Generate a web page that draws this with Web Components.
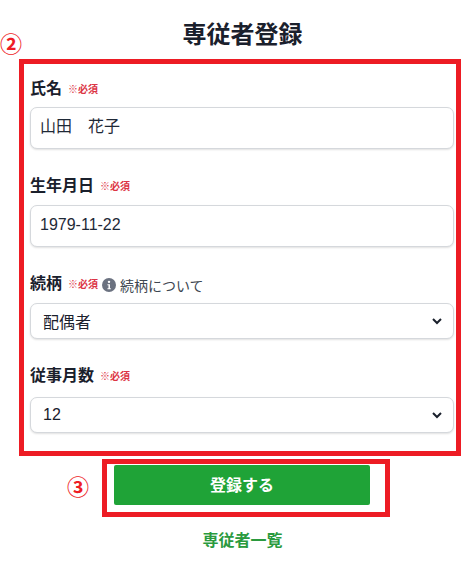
<!DOCTYPE html>
<html lang="ja"><head><meta charset="utf-8"><title>専従者登録</title>
<style>
html,body{margin:0;padding:0;background:#fff}
body{font-family:"Noto Sans CJK JP","Liberation Sans",sans-serif;color:#1a202c}
</style></head><body>
<reg-page>
<reg-field label="氏名" style="--top:12px;--gap:7px"><text-box>山田　花子</text-box></reg-field>
<reg-field label="生年月日" style="--top:24px;--gap:8px"><text-box>1979-11-22</text-box></reg-field>
<reg-field label="続柄" note="続柄について" style="--top:24px;--gap:8px"><select-box>配偶者</select-box></reg-field>
<reg-field label="従事月数" style="--top:24px;--gap:10px"><select-box>12</select-box></reg-field>
</reg-page>
<script>
function def(name,html){customElements.define(name,class extends HTMLElement{constructor(){super();this.attachShadow({mode:"open"}).innerHTML=typeof html==="function"?html(this):html}})}
def("reg-page",`<style>
:host{display:block;width:461px;height:562px;overflow:hidden;position:relative}
h1{margin:0;height:59px;box-sizing:border-box;padding:18px 0 0 24px;text-align:center;font-size:24px;line-height:30px;font-weight:700;color:#1a202c}
.mark{position:absolute;left:0;color:#ee1c25;font-size:22px;line-height:24px;font-weight:700}
.box{margin-left:19px;width:442px;height:397px;box-sizing:border-box;border:5px solid #ed1c24;padding:0 2px 0 6px}
.bar{margin:3px 0 0 102px;width:288px;height:58px;box-sizing:border-box;border:5px solid #ed1c24;padding:1px 15px 0 7px}
button{display:block;width:256px;height:40px;border:0;border-radius:2px;background:#1fa337;color:#fff;font:700 16px/38px "Noto Sans CJK JP",sans-serif;padding:0 0 2px}
a{display:block;margin-top:10px;padding-left:24px;text-align:center;color:#2a9a3e;font-size:16px;line-height:24px;font-weight:700;text-decoration:none}
</style>
<h1>専従者登録</h1>
<span class="mark" style="top:30px;">②</span>
<div class="box"><slot></slot></div>
<span class="mark" style="top:473px;left:67px">③</span>
<div class="bar"><button>登録する</button></div>
<a href="#">専従者一覧</a>`);
def("reg-field",el=>`<style>
:host{display:block;margin-top:var(--top)}
.row{display:flex;align-items:center;height:24px;margin-bottom:var(--gap)}
b{font-size:16px;line-height:22px;height:22px;margin-bottom:2px;color:#1a202c}
em{font-style:normal;font-weight:700;font-size:10px;color:#dc3545;margin-left:6px;line-height:24px;position:relative;top:1px}
.n{display:inline-flex;align-items:center;gap:4px;margin-left:4px;font-size:14px;color:#3d4650;position:relative;top:2px}
svg{display:block}
</style>
<div class="row"><b>${el.getAttribute("label")}</b><em>※必須</em>${el.getAttribute("note")?`<span class="n"><svg width="14" height="14" viewBox="0 0 16 16"><circle cx="8" cy="8" r="8" fill="#6b7280"/><circle cx="8" cy="4.4" r="1.4" fill="#fff"/><path d="M6.2 7h2.9v4.6h1v1.2H6.2v-1.2h1.2V8.2H6.2z" fill="#fff"/></svg>${el.getAttribute("note")}</span>`:""}</div><slot></slot>`);
def("text-box",`<style>
:host{display:block;height:42px;box-sizing:border-box;border:1px solid #d5d8dc;border-radius:7px;box-shadow:0 1px 2px rgba(0,0,0,.12);padding:0 9px;font:16px/38px "Liberation Sans","Noto Sans CJK JP",sans-serif;color:#1f2937;background:#fff}
</style><slot></slot>`);
def("select-box",`<style>
:host{display:flex;align-items:center;justify-content:space-between;height:36px;box-sizing:border-box;border:1px solid #d5d8dc;border-radius:7px;box-shadow:0 1px 2px rgba(0,0,0,.12);padding:0 11px 1px 12px;font:16px "Liberation Sans","Noto Sans CJK JP",sans-serif;color:#1a202c;background:#fff}
svg{margin-top:1px}
</style><slot></slot><svg width="10" height="8" viewBox="0 0 10 8"><path d="M1 2l4 4 4-4" fill="none" stroke="#1a202c" stroke-width="2"/></svg>`);
</script>
</body></html>
